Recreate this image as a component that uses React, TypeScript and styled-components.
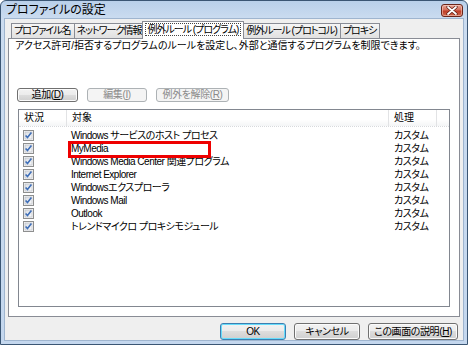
import React from 'react';
import styled, { createGlobalStyle, css } from 'styled-components';

const Global = createGlobalStyle`
  html, body { margin: 0; padding: 0; background: #ffffff; }
  body { font-family: "Liberation Sans", "Noto Sans CJK JP", sans-serif; }
`;

const Window = styled.div`
  width: 468px;
  height: 345px;
  box-sizing: border-box;
  border: 1px solid #3b5674;
  border-radius: 6px 6px 0 0;
  background: linear-gradient(#b9d0ea, #cbdcf0 18px, #c4d7ee);
  display: flex;
  flex-direction: column;
  padding: 0 4px 4px 4px;
  font-size: 10px;
  font-feature-settings: "palt";
  color: #000;
  overflow: hidden;
`;

const TitleBar = styled.div`
  height: 18px;
  flex: none;
  display: flex;
  align-items: center;
  justify-content: space-between;
  padding-left: 1px;
`;

const TitleText = styled.span`
  font-size: 12px;
  line-height: 14px;
  color: #000;
`;

const CloseButton = styled.div`
  width: 22px;
  height: 13px;
  box-sizing: border-box;
  border: 1px solid #6b2519;
  border-radius: 3px;
  background: linear-gradient(#e8a596, #d36f5b 45%, #c03c26 55%, #cf6a4f);
  box-shadow: inset 0 0 0 1px rgba(255, 220, 210, 0.5);
  display: flex;
  align-items: center;
  justify-content: center;
`;

const Content = styled.div`
  flex: 1;
  background: #efefef;
  display: flex;
  flex-direction: column;
  padding: 4px 3px 0 3px;
  box-shadow: 0 0 0 1px #9fb5cf;
`;

const TabStrip = styled.div`
  height: 15px;
  flex: none;
  display: flex;
  align-items: flex-end;
  padding-left: 3px;
  position: relative;
  z-index: 1;
`;

const Tab = styled.div<{ $active?: boolean }>`
  height: 15px;
  box-sizing: border-box;
  border: 1px solid #898c95;
  border-bottom: none;
  margin-right: -1px;
  padding: 0 3px 0 2px;
  display: flex;
  align-items: center;
  white-space: nowrap;
  letter-spacing: -1px;
  background: linear-gradient(#f6f6f6, #eaeaea 50%, #e1e1e1);
  line-height: 12px;
  ${(p) =>
    p.$active &&
    css`
      height: 18px;
      margin: 0 -1px -1px -2px;
      padding: 0 2px 2px 2px;
      background: #ffffff;
      position: relative;
      z-index: 2;
    `}
`;

const Focus = styled.span`
  border: 1px dotted #444;
  padding: 0 2px 0 1px;
  line-height: 11px;
`;

const Panel = styled.div`
  height: 279px;
  flex: none;
  box-sizing: border-box;
  border: 1px solid #898c95;
  background: #ffffff;
  display: flex;
  flex-direction: column;
  padding: 1px 9px 9px 6px;
`;

const Description = styled.div`
  line-height: 12px;
  white-space: nowrap;
`;

const ButtonRow = styled.div`
  display: flex;
  gap: 9px;
  margin-top: 36px;
  padding-left: 2px;
`;

const Button = styled.div<{ $w: number; $h?: number; $disabled?: boolean; $default?: boolean }>`
  width: ${(p) => p.$w}px;
  height: ${(p) => p.$h ?? 14}px;
  box-sizing: border-box;
  border: 1px solid #707070;
  border-radius: 3px;
  background: linear-gradient(#f2f2f2, #ebebeb 50%, #dddddd 50%, #cfcfcf);
  box-shadow: inset 0 0 0 1px #fbfbfb;
  display: flex;
  align-items: center;
  justify-content: center;
  white-space: nowrap;
  line-height: 12px;
  letter-spacing: -0.4px;
  ${(p) =>
    p.$disabled &&
    css`
      border-color: #adb2b5;
      background: #f4f4f4;
      box-shadow: none;
      color: #8a8a8a;
    `}
  ${(p) =>
    p.$default &&
    css`
      border-color: #3c7fb1;
      box-shadow: inset 0 0 0 1px #66dcfb;
    `}
`;

const List = styled.div`
  flex: 1;
  margin-top: 7px;
  margin-left: 3px;
  border: 1px solid #828790;
  position: relative;
  display: flex;
  flex-direction: column;
`;

const Grid = styled.div`
  display: grid;
  grid-template-columns: 48px 322px 48px 1fr;
`;

const Header = styled(Grid)`
  height: 17px;
  background: linear-gradient(#ffffff, #ffffff 60%, #f4f5f6);
  border-bottom: 1px dotted #d8dadd;
  box-sizing: border-box;
`;

const HeaderCell = styled.div<{ $last?: boolean }>`
  border-right: ${(p) => (p.$last ? 'none' : '1px solid #e2e3e5')};
  padding-left: 5px;
  display: flex;
  align-items: center;
  line-height: 12px;
`;

const Rows = styled.div`
  padding-top: 2px;
  display: flex;
  flex-direction: column;
`;

const Row = styled(Grid)`
  height: 13px;
`;

const Cell = styled.div<{ $pad?: number }>`
  padding-left: ${(p) => p.$pad ?? 4}px;
  display: flex;
  align-items: center;
  white-space: nowrap;
  line-height: 12px;
  letter-spacing: -0.5px;
`;

const Highlight = styled.div`
  position: absolute;
  left: 49px;
  top: 31px;
  width: 143px;
  height: 17px;
  box-sizing: border-box;
  border: 3px solid #ee0000;
  pointer-events: none;
`;

const ButtonBar = styled.div`
  display: flex;
  justify-content: flex-end;
  gap: 8px;
  margin-top: 6px;
  padding-right: 2px;
`;

const Check = () => (
  <svg width="11" height="11" viewBox="0 0 11 11">
    <defs>
      <linearGradient id="cbg" x1="0" y1="0" x2="1" y2="1">
        <stop offset="0" stopColor="#d9dde2" />
        <stop offset="1" stopColor="#fbfbfb" />
      </linearGradient>
    </defs>
    <rect x="0.5" y="0.5" width="10" height="10" fill="#f6f6f6" stroke="#8e8f8f" />
    <rect x="2" y="2" width="7" height="7" fill="url(#cbg)" stroke="#b4bac2" strokeWidth="0.6" />
    <path d="M2.6 5.4 L4.5 7.6 L8.4 2.6" fill="none" stroke="#3f6fb8" strokeWidth="1.6" />
  </svg>
);

const CloseX = () => (
  <svg width="12" height="9" viewBox="0 0 12 9">
    <path d="M2 1 L10 8 M10 1 L2 8" stroke="#5a1a10" strokeWidth="3.2" strokeLinecap="round" />
    <path d="M2 1 L10 8 M10 1 L2 8" stroke="#ffffff" strokeWidth="1.8" strokeLinecap="round" />
  </svg>
);

const rows = [
  'Windows サービスのホスト プロセス',
  'MyMedia',
  'Windows Media Center 関連プログラム',
  'Internet Explorer',
  'Windowsエクスプローラ',
  'Windows Mail',
  'Outlook',
  'トレンドマイクロ プロキシモジュール',
];

export default function App() {
  return (
    <>
      <Global />
      <Window>
        <TitleBar>
          <TitleText>プロファイルの設定</TitleText>
          <CloseButton>
            <CloseX />
          </CloseButton>
        </TitleBar>
        <Content>
          <TabStrip>
            <Tab>プロファイル名</Tab>
            <Tab>ネットワーク情報</Tab>
            <Tab $active>
              <Focus>例外ルール (プログラム)</Focus>
            </Tab>
            <Tab>例外ルール (プロトコル)</Tab>
            <Tab>プロキシ</Tab>
          </TabStrip>
          <Panel>
            <Description>
              アクセス許可/拒否するプログラムのルールを設定し、外部と通信するプログラムを制限できます。
            </Description>
            <ButtonRow>
              <Button $w={61}>
                追加(<u>D</u>)
              </Button>
              <Button $w={60} $disabled>
                編集(<u>I</u>)
              </Button>
              <Button $w={73} $disabled>
                例外を解除(<u>R</u>)
              </Button>
            </ButtonRow>
            <List>
              <Header>
                <HeaderCell>状況</HeaderCell>
                <HeaderCell>対象</HeaderCell>
                <HeaderCell>処理</HeaderCell>
                <HeaderCell $last />
              </Header>
              <Rows>
                {rows.map((name) => (
                  <Row key={name}>
                    <Cell>
                      <Check />
                    </Cell>
                    <Cell>{name}</Cell>
                    <Cell $pad={5}>カスタム</Cell>
                    <Cell />
                  </Row>
                ))}
              </Rows>
              <Highlight />
            </List>
          </Panel>
          <ButtonBar>
            <Button $w={66} $h={17} $default>
              OK
            </Button>
            <Button $w={66} $h={17}>
              キャンセル
            </Button>
            <Button $w={90} $h={17}>
              この画面の説明(<u>H</u>)
            </Button>
          </ButtonBar>
        </Content>
      </Window>
    </>
  );
}
